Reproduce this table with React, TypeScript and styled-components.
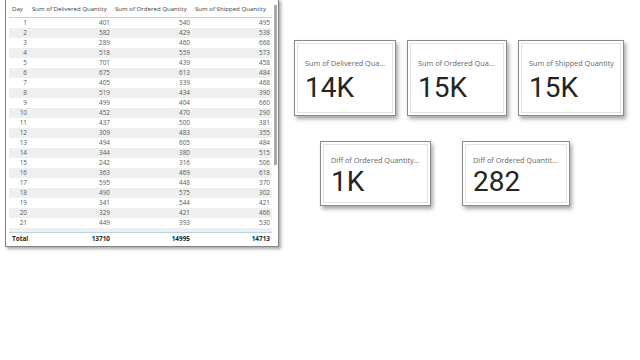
import React from "react";
import styled, { createGlobalStyle } from "styled-components";

const GlobalStyle = createGlobalStyle`
	html, body {
		margin: 0;
		padding: 0;
		background: #ffffff;
	}
	body {
		font-family: "Open Sans", "Noto Sans", sans-serif;
	}
`;

const Canvas = styled.div`
	width: 640px;
	height: 360px;
	display: flex;
	align-items: flex-start;
	overflow: hidden;
	background: #ffffff;
`;

const TableVisual = styled.div`
	position: relative;
	margin: -1px 0 0 5px;
	width: 263px;
	padding: 0 6px 1px 3px;
	border: 1px solid #858585;
	background: #ffffff;
	box-shadow: 2px 2px 3px rgba(0, 0, 0, 0.35);
	display: flex;
	flex-direction: column;
	flex-shrink: 0;
`;

const Scrollbar = styled.div`
	position: absolute;
	top: 5px;
	right: 1px;
	width: 3px;
	height: 160px;
	background: #a8a8a8;
`;

const GridRow = styled.div<{ $alt?: boolean }>`
	display: grid;
	grid-template-columns: 20px 82px 80px 80px;
	height: 10px;
	align-items: center;
	font-size: 6.4px;
	color: #5a5a5a;
	background: ${(p) => (p.$alt ? "#efefef" : "transparent")};
`;

const HeaderRow = styled(GridRow)`
	height: 17px;
	font-size: 6.1px;
	color: #3a3a3a;
	border-bottom: 1px solid #b9d3ea;
`;

const TotalRow = styled(GridRow)`
	height: 12px;
	color: #252423;
	font-weight: 700;
	border-top: 1px solid #b9d3ea;
`;

const Body = styled.div`
	height: 214px;
	overflow: hidden;
`;

const Cell = styled.div<{ $align?: "left" | "right"; $pl?: number; $pr?: number }>`
	text-align: ${(p) => p.$align ?? "right"};
	padding-left: ${(p) => p.$pl ?? 0}px;
	padding-right: ${(p) => p.$pr ?? 0}px;
	white-space: nowrap;
	line-height: 10px;
`;

const RightPane = styled.div`
	margin-left: 15px;
	padding-top: 40px;
	display: flex;
	flex-direction: column;
`;

const CardRow = styled.div<{ $gap: number; $indent?: number; $top?: number }>`
	display: flex;
	gap: ${(p) => p.$gap}px;
	padding-left: ${(p) => p.$indent ?? 0}px;
	margin-top: ${(p) => p.$top ?? 0}px;
`;

const Card = styled.div<{ $w: number; $h: number; $pad: number }>`
	box-sizing: border-box;
	width: ${(p) => p.$w}px;
	height: ${(p) => p.$h}px;
	padding: ${(p) => p.$pad}px 0 0 10px;
	border: 1px solid #8a8a8a;
	background: #ffffff;
	box-shadow: inset 0 0 0 2px #ffffff, inset 0 0 0 3px #e2e2e2, 2px 3px 4px rgba(0, 0, 0, 0.35);
	display: flex;
	flex-direction: column;
`;

const CardTitle = styled.div`
	font-size: 7.3px;
	line-height: 10px;
	color: #666666;
	white-space: nowrap;
`;

const CardValue = styled.div<{ $gap: number }>`
	margin-top: ${(p) => p.$gap}px;
	font-family: Roboto, "Open Sans", sans-serif;
	font-size: 28px;
	line-height: 28px;
	color: #252423;
`;

const delivered = [401, 582, 289, 518, 701, 675, 405, 519, 499, 452, 437, 309, 494, 344, 242, 363, 595, 490, 341, 329, 449];
const ordered = [540, 429, 460, 559, 439, 613, 339, 434, 404, 470, 500, 483, 605, 380, 316, 469, 448, 575, 544, 421, 393];
const shipped = [495, 538, 668, 573, 458, 484, 468, 390, 660, 290, 381, 355, 484, 515, 506, 618, 370, 302, 421, 466, 530];

const cards = [
	{ title: "Sum of Delivered Qua...", value: "14K", w: 102 },
	{ title: "Sum of Ordered Qua...", value: "15K", w: 100 },
	{ title: "Sum of Shipped Quantity", value: "15K", w: 106 },
];

const diffCards = [
	{ title: "Diff of Ordered Quantity...", value: "1K", w: 111 },
	{ title: "Diff of Ordered Quantit...", value: "282", w: 108 },
];

const App: React.FC = () => {
	return (
		<>
			<GlobalStyle />
			<Canvas>
				<TableVisual>
					<HeaderRow>
						<Cell $align="left" $pl={3}>Day</Cell>
						<Cell $align="left" $pl={3}>Sum of Delivered Quantity</Cell>
						<Cell $align="left" $pl={4}>Sum of Ordered Quantity</Cell>
						<Cell $align="left" $pl={4}>Sum of Shipped Quantity</Cell>
					</HeaderRow>
					<Body>
						{delivered.map((d, i) => (
							<GridRow key={i} $alt={i % 2 === 1}>
								<Cell $pr={2}>{i + 1}</Cell>
								<Cell $pr={1}>{d}</Cell>
								<Cell $pr={1}>{ordered[i]}</Cell>
								<Cell $pr={1}>{shipped[i]}</Cell>
							</GridRow>
						))}
						<GridRow $alt />
					</Body>
					<TotalRow>
						<Cell $align="left" $pl={3}>Total</Cell>
						<Cell $pr={1}>13710</Cell>
						<Cell $pr={1}>14995</Cell>
						<Cell $pr={1}>14713</Cell>
					</TotalRow>
					<Scrollbar />
				</TableVisual>
				<RightPane>
					<CardRow $gap={11}>
						{cards.map((c) => (
							<Card key={c.title} $w={c.w} $h={76} $pad={17}>
								<CardTitle>{c.title}</CardTitle>
								<CardValue $gap={6}>{c.value}</CardValue>
							</Card>
						))}
					</CardRow>
					<CardRow $gap={31} $indent={26} $top={25}>
						{diffCards.map((c) => (
							<Card key={c.title} $w={c.w} $h={65} $pad={13}>
								<CardTitle>{c.title}</CardTitle>
								<CardValue $gap={3}>{c.value}</CardValue>
							</Card>
						))}
					</CardRow>
				</RightPane>
			</Canvas>
		</>
	);
};

export default App;
